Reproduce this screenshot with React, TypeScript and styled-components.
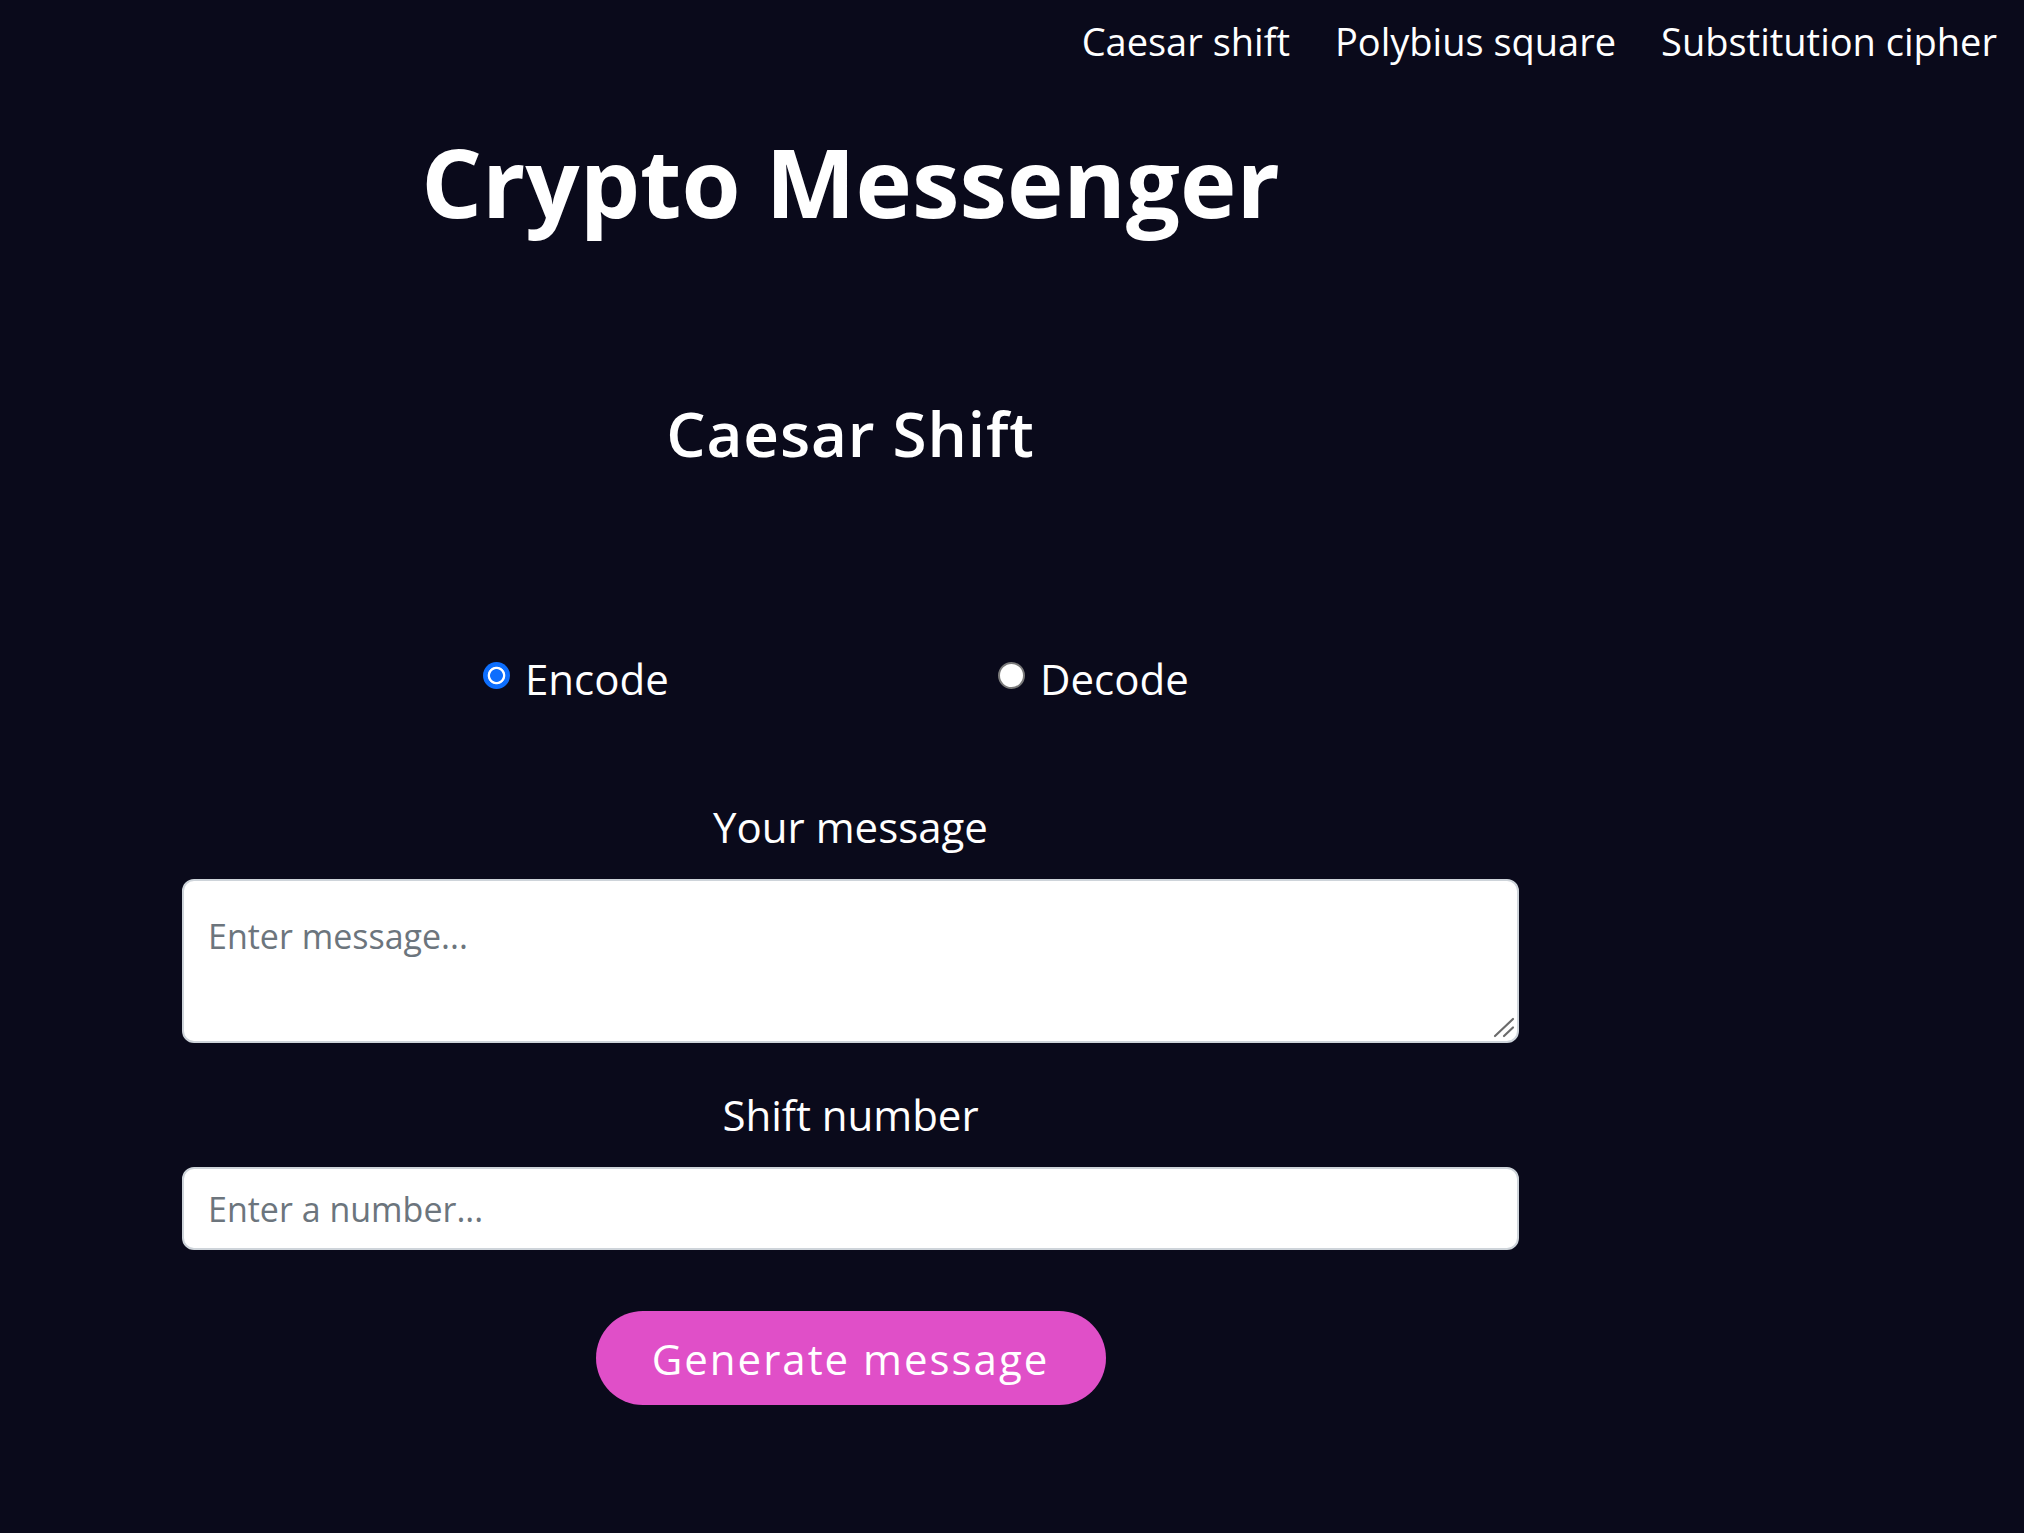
import React, { useState } from "react";
import styled, { createGlobalStyle } from "styled-components";

const GlobalStyle = createGlobalStyle`
  html, body {
    margin: 0;
    padding: 0;
    background: #0a0a1b;
  }
  body {
    font-family: "Open Sans", "Noto Sans", "Liberation Sans", sans-serif;
    color: #ffffff;
  }
  * { box-sizing: border-box; }
`;

const Page = styled.div`
  min-height: 100vh;
  background: #0a0a1b;
`;

const NavBar = styled.nav`
  display: flex;
  justify-content: flex-end;
  gap: 45px;
  padding: 17px 27px 0 0;
`;

const NavLink = styled.a`
  color: #ffffff;
  font-size: 38px;
  line-height: 48px;
  text-decoration: none;
`;

const Main = styled.main`
  width: 1337px;
  margin-left: 182px;
  display: flex;
  flex-direction: column;
  align-items: center;
`;

const Title = styled.h1`
  margin: 59px 0 0;
  font-size: 95.5px;
  font-weight: 700;
  line-height: 115px;
`;

const Subtitle = styled.h2`
  margin: 156px 0 0;
  font-size: 62px;
  font-weight: 600;
  letter-spacing: 0.9px;
  line-height: 77px;
`;

const RadioRow = styled.div`
  margin-top: 180px;
  align-self: stretch;
  display: flex;
  padding-left: 301px;
`;

const RadioOption = styled.label`
  width: 515px;
  display: flex;
  align-items: center;
  gap: 15px;
  font-size: 42px;
  line-height: 53px;
  cursor: pointer;
`;

const RadioInput = styled.input`
  appearance: none;
  margin: -6px 0 0;
  width: 27px;
  height: 27px;
  border-radius: 50%;
  flex: none;
  background: #ffffff;
  border: 2px solid #7a7a7a;

  &:checked {
    border: none;
    background: radial-gradient(
      circle,
      #0d6efd 0 6px,
      #ffffff 6.8px 8.4px,
      #0d6efd 9.2px
    );
  }
`;

const FieldLabel = styled.label<{ $gap: number }>`
  margin-top: ${(p) => p.$gap}px;
  font-size: 42px;
  line-height: 50px;
`;

const fieldBase = `
  width: 100%;
  border: 2px solid #ced4da;
  border-radius: 12px;
  background: #ffffff;
  color: #212529;
  font-family: "Open Sans", "Noto Sans", "Liberation Sans", sans-serif;
  font-size: 34px;
  outline: none;
  &::placeholder {
    color: #6c757d;
  }
`;

const AreaWrap = styled.div`
  position: relative;
  width: 100%;
  margin-top: 27px;
  display: flex;
`;

const MessageArea = styled.textarea`
  ${fieldBase}
  height: 164px;
  padding: 28px 24px;
  line-height: 54px;
  resize: none;
`;

const ResizeGrip = styled.svg`
  position: absolute;
  right: 4px;
  bottom: 5px;
  width: 22px;
  height: 22px;
  pointer-events: none;
`;

const NumberInput = styled.input`
  ${fieldBase}
  margin-top: 27px;
  height: 83px;
  padding: 0 24px;
`;

const GenerateButton = styled.button`
  margin-top: 61px;
  width: 510px;
  height: 94px;
  border: none;
  border-radius: 47px;
  background: #e04fc8;
  color: #ffffff;
  font-family: "Open Sans", "Noto Sans", "Liberation Sans", sans-serif;
  font-size: 42px;
  letter-spacing: 2px;
  cursor: pointer;
`;

export default function App() {
  const [mode, setMode] = useState("encode");
  return (
    <Page>
      <GlobalStyle />
      <NavBar>
        <NavLink href="#">Caesar shift</NavLink>
        <NavLink href="#">Polybius square</NavLink>
        <NavLink href="#">Substitution cipher</NavLink>
      </NavBar>
      <Main>
        <Title>Crypto Messenger</Title>
        <Subtitle>Caesar Shift</Subtitle>
        <RadioRow>
          <RadioOption>
            <RadioInput
              type="radio"
              name="mode"
              checked={mode === "encode"}
              onChange={() => setMode("encode")}
            />
            Encode
          </RadioOption>
          <RadioOption>
            <RadioInput
              type="radio"
              name="mode"
              checked={mode === "decode"}
              onChange={() => setMode("decode")}
            />
            Decode
          </RadioOption>
        </RadioRow>
        <FieldLabel $gap={97} htmlFor="message">Your message</FieldLabel>
        <AreaWrap>
          <MessageArea id="message" placeholder="Enter message..." />
          <ResizeGrip viewBox="0 0 22 22" aria-hidden="true">
            <line x1="2" y1="20" x2="20" y2="3" stroke="#6b6b6b" strokeWidth="2.2" strokeLinecap="round" />
            <line x1="11" y1="20" x2="20" y2="11.5" stroke="#6b6b6b" strokeWidth="2.2" strokeLinecap="round" />
          </ResizeGrip>
        </AreaWrap>
        <FieldLabel $gap={47} htmlFor="shift">Shift number</FieldLabel>
        <NumberInput id="shift" type="number" placeholder="Enter a number..." />
        <GenerateButton type="button">Generate message</GenerateButton>
      </Main>
    </Page>
  );
}
